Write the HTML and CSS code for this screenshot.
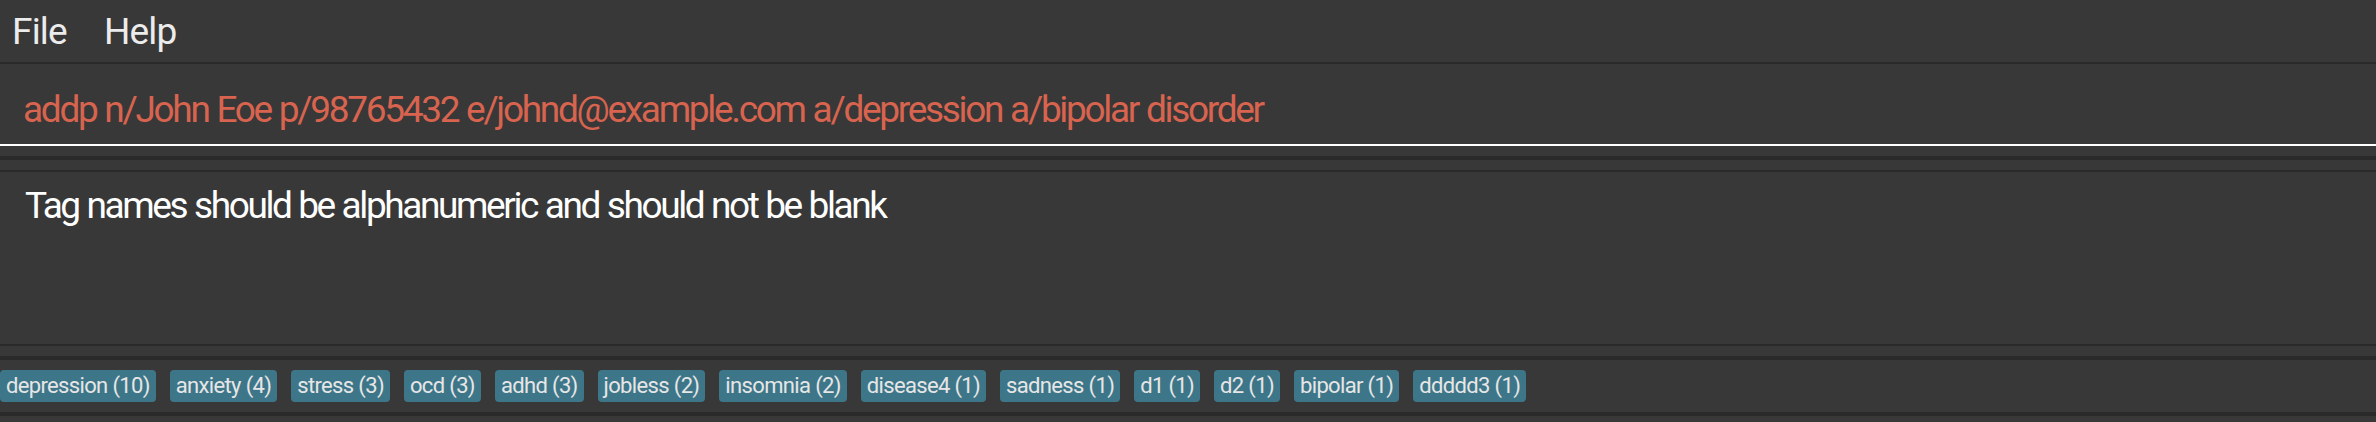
FILE: index.html
```html
<!DOCTYPE html>
<html>
<head>
<meta charset="utf-8">
<link rel="stylesheet" href="styles.css">
</head>
<body>
<div class="app">
  <div class="menubar">
    <span class="menu-item">File</span>
    <span class="menu-item">Help</span>
  </div>
  <div class="command-box">
    <div class="command-text">addp n/John Eoe p/98765432 e/johnd@example.com a/depression a/bipolar disorder</div>
  </div>
  <div class="spacer"></div>
  <div class="divider"></div>
  <div class="spacer"></div>
  <div class="result-box">
    <div class="result-text">Tag names should be alphanumeric and should not be blank</div>
  </div>
  <div class="spacer"></div>
  <div class="divider"></div>
  <div class="tag-bar">
    <span class="tag">depression (10)</span>
    <span class="tag">anxiety (4)</span>
    <span class="tag">stress (3)</span>
    <span class="tag">ocd (3)</span>
    <span class="tag">adhd (3)</span>
    <span class="tag">jobless (2)</span>
    <span class="tag">insomnia (2)</span>
    <span class="tag">disease4 (1)</span>
    <span class="tag">sadness (1)</span>
    <span class="tag">d1 (1)</span>
    <span class="tag">d2 (1)</span>
    <span class="tag">bipolar (1)</span>
    <span class="tag">ddddd3 (1)</span>
  </div>
  <div class="divider"></div>
</div>
</body>
</html>
```
FILE: styles.css
```css
html, body {
  margin: 0;
  padding: 0;
  background: #383838;
}
body {
  font-family: Roboto, Inter, sans-serif;
  height: 422px;
  overflow: hidden;
}
.app {
  display: flex;
  flex-direction: column;
}
.menubar {
  height: 62px;
  border-bottom: 2px solid #2a2a2a;
  display: flex;
  align-items: center;
  gap: 37px;
  padding-left: 12px;
}
.menu-item {
  color: #ececec;
  font-size: 37px;
  letter-spacing: -0.8px;
  line-height: 1;
}
.command-box {
  height: 80px;
  border-bottom: 2px solid #ffffff;
  display: flex;
  align-items: center;
  padding-left: 23px;
}
.command-text {
  color: #d8644f;
  font-size: 37px;
  letter-spacing: -2.3px;
  word-spacing: 1px;
  line-height: 1;
  padding-top: 11px;
}
.spacer {
  height: 10px;
}
.divider {
  height: 4px;
  background: #2a2a2a;
}
.result-box {
  border-top: 2px solid #2a2a2a;
  border-bottom: 2px solid #2a2a2a;
  padding-left: 25px;
  padding-top: 12px;
  box-sizing: border-box;
  height: 176px;
}
.result-text {
  color: #ffffff;
  font-size: 37px;
  letter-spacing: -2.4px;
  word-spacing: 1px;
  line-height: 1.2;
}
.tag-bar {
  height: 52px;
  display: flex;
  align-items: center;
  gap: 14px;
}
.tag {
  background: #3e7689;
  color: #e6e6e6;
  font-size: 22px;
  letter-spacing: -0.65px;
  height: 32px;
  line-height: 32px;
  padding: 0 6px;
  border-radius: 4px;
}
```
